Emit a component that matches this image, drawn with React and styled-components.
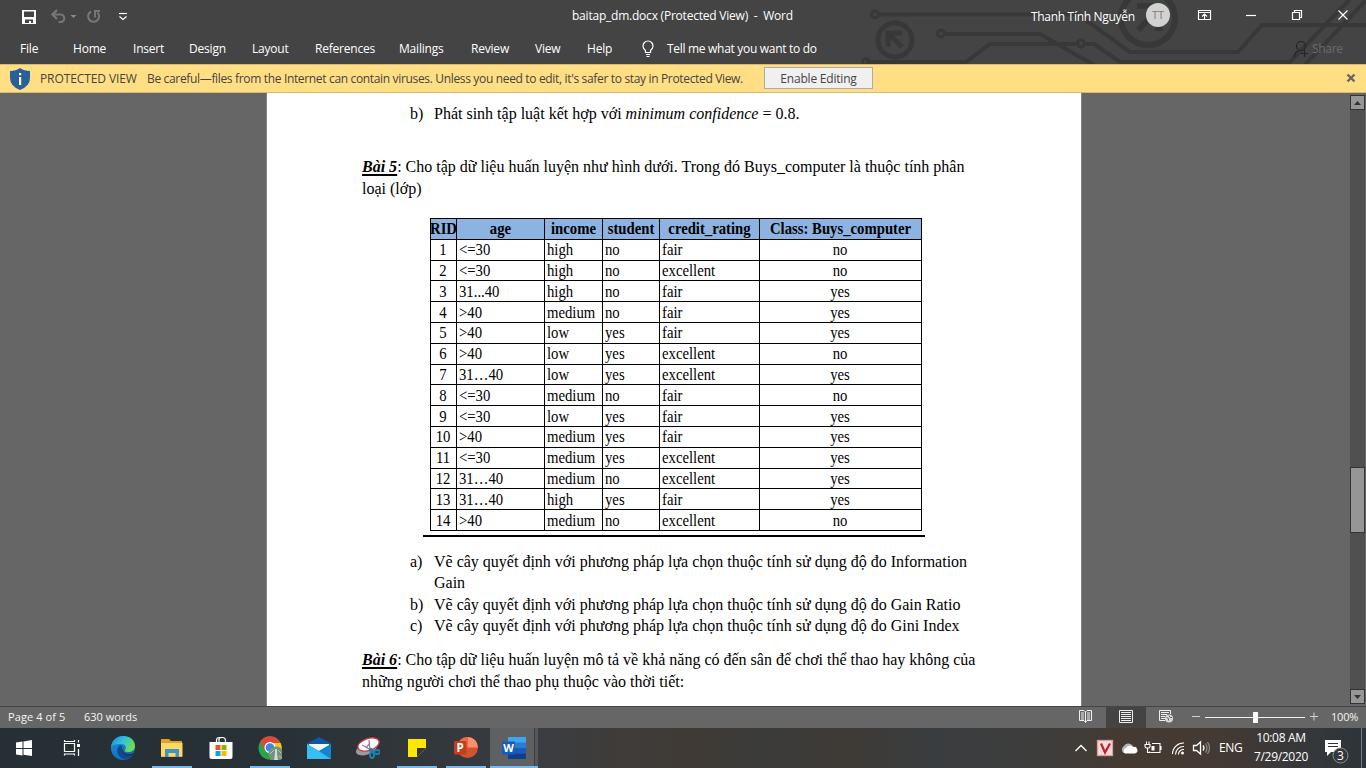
import React from "react";
import styled, { createGlobalStyle, css } from "styled-components";

const Global = createGlobalStyle`
  *, *::before, *::after { box-sizing: border-box; }
  body { margin: 0; overflow: hidden; }
`;

const ui = `"Open Sans", "Noto Sans", sans-serif`;
const serif = `"Liberation Serif", "Times New Roman", serif`;

const Window = styled.div`
  width: 1366px;
  height: 768px;
  display: flex;
  flex-direction: column;
  overflow: hidden;
  font: 12px ${ui};
`;

/* ---------- ribbon ---------- */
const Ribbon = styled.header`
  position: relative;
  flex: none;
  height: 64px;
  background: #444444;
  color: #fff;
`;
const Circuit = styled.svg`
  position: absolute;
  left: 850px;
  top: 0;
`;
const TitleBar = styled.div`
  position: relative;
  display: flex;
  align-items: center;
  height: 32px;
`;
const QuickAccess = styled.div`
  display: flex;
  width: 572px;
  height: 32px;
`;
const Title = styled.div`
  width: 459px;
  letter-spacing: -0.22px;
  white-space: pre;
  line-height: 32px;
`;
const UserName = styled.div`
  width: 115px;
  letter-spacing: -0.31px;
  white-space: nowrap;
`;
const Avatar = styled.div`
  width: 24px;
  height: 24px;
  margin: -2px 4px 0 0;
  border-radius: 50%;
  background: #d2d2d2;
  color: #8c7a70;
  font-size: 11px;
  line-height: 24px;
  text-align: center;
`;
const Menu = styled.nav`
  position: relative;
  display: flex;
  height: 32px;
  padding-left: 20px;
  line-height: 33px;
`;
const MenuItem = styled.div`
  width: ${(p) => p.$w}px;
  letter-spacing: ${(p) => p.$ls ?? -0.2}px;
  white-space: nowrap;
`;
const Share = styled.div`
  display: flex;
  margin-left: auto;
  width: 73px;
  gap: 3px;
  color: #6b6b6b;
  letter-spacing: -0.3px;
`;

/* ---------- message bar ---------- */
const MessageBar = styled.div`
  flex: none;
  display: flex;
  align-items: center;
  height: 29px;
  padding-left: 10px;
  border-top: 1px solid #d9b778;
  border-bottom: 1px solid #d9b778;
  background: #ffde84;
  color: #444;
  white-space: nowrap;
`;
const MessageTitle = styled.div`
  width: 117px;
  padding-left: 10px;
  letter-spacing: -0.1px;
`;
const MessageText = styled.div`
  width: 617px;
  letter-spacing: -0.337px;
`;
const EnableButton = styled.button`
  width: 109px;
  height: 22px;
  margin-top: -1px;
  padding: 0;
  border: 1px solid #ababab;
  background: #f0f0f0;
  color: #444;
  font: 12px/19px ${ui};
  letter-spacing: -0.2px;
`;
const CloseIcon = styled.svg`
  margin: -1px 10px 0 auto;
`;

/* ---------- document ---------- */
const Workspace = styled.main`
  flex: none;
  display: flex;
  height: 613px;
  background: #666666;
`;
const Page = styled.article`
  width: 816px;
  height: 613px;
  margin-left: 266px;
  padding: 10px 0 0 96px;
  border-left: 1px solid #828282;
  border-right: 1px solid #828282;
  background: #fff;
  color: #000;
  font: 16px/22px ${serif};
  white-space: nowrap;
  overflow: hidden;
`;
const Para = styled.p`
  margin: 0 0 0 -1px;
  padding-top: ${(p) => p.$top ?? 0}px;
`;
const Line = styled.span`
  display: block;
`;
const Heading = styled.span`
  font-weight: bold;
  font-style: italic;
  text-decoration: underline;
  text-decoration-thickness: 2px;
  text-underline-offset: 2px;
`;
const ListItem = styled.div`
  display: flex;
  margin-left: 47px;
  padding-top: ${(p) => p.$top ?? 0}px;
  line-height: ${(p) => p.$lh ?? 21.4}px;
`;
const Marker = styled.span`
  width: 24px;
`;
const Figure = styled.figure`
  width: 502px;
  height: 319px;
  margin: 18px 0 0 60px;
  padding-left: 7px;
  border-bottom: 2px solid #000;
`;
const Grid = styled.table`
  border-collapse: collapse;
  table-layout: fixed;
  width: 491px;
  height: 313px;
  font: 16px/18px ${serif};
`;
const cell = css`
  height: 20.8px;
  padding: 1px 0 0 2px;
  border: 1px solid #000;
  text-align: ${(p) => (p.$center ? "center" : "left")};
`;
const Th = styled.th`
  ${cell}
  padding-left: 0;
  background: #8db3e2;
`;
const Td = styled.td`
  ${cell}
`;
const Narrow = styled.span`
  display: block;
  margin: ${(p) => (p.$center ? "0 -1px 0 -4px" : 0)};
  transform: scaleX(0.92);
  transform-origin: ${(p) => (p.$center ? "center" : "left")};
`;
const HeadText = styled(Narrow)`
  margin: 0 -4px;
`;

/* ---------- scroll bar ---------- */
const Scroll = styled.div`
  display: flex;
  flex-direction: column;
  width: 15px;
  height: 609px;
  margin: 2px 1px 0 auto;
  background: #505050;
`;
const ScrollButton = styled.div`
  width: 15px;
  height: 15px;
  border: 1px solid #333;
  background: #969696;
  display: flex;
  align-items: center;
  justify-content: center;
`;
const Thumb = styled.div`
  height: 66px;
  margin: 357px 0 auto;
  border: 1px solid #333;
  background: #969696;
`;

/* ---------- status bar ---------- */
const StatusBar = styled.footer`
  flex: none;
  display: flex;
  height: 22px;
  border-top: 1px solid #444;
  background: #666666;
  color: #f4f4f4;
  font-size: 11px;
  line-height: 20px;
  padding-left: 8px;
  white-space: nowrap;
`;
const StatusText = styled.div`
  width: ${(p) => p.$w}px;
  letter-spacing: ${(p) => p.$ls ?? 0}px;
`;
const ViewButton = styled.div`
  width: 40px;
  background: ${(p) => (p.$on ? "#444444" : "transparent")};
  display: flex;
  justify-content: center;
`;

/* ---------- task bar ---------- */
const TaskBar = styled.div`
  flex: none;
  display: flex;
  height: 40px;
  background: linear-gradient(90deg, #263034 0, #283236 290px, #30363a 400px, #3a3d41 540px, #3f3c3a 620px, #3f3a35 690px, #3b3b3a 760px, #3e3a36 850px, #3a3d3f 930px, #3e3d3c 1050px, #453a31 1130px, #443a33 1210px, #35373b 1310px, #2d343a 1366px);
`;
const Task = styled.div`
  position: relative;
  width: ${(p) => p.$w ?? 49}px;
  height: 40px;
  display: flex;
  align-items: center;
  justify-content: center;
  background: ${(p) => (p.$active ? "linear-gradient(90deg, #5f6062 44px, #3c3d3f 44px, #3c3d3f 45px, #55565a 45px)" : "none")};
  &::after {
    content: "";
    position: absolute;
    left: ${(p) => (p.$active ? 0 : 5)}px;
    width: ${(p) => (p.$active ? 48 : 40)}px;
    bottom: 0;
    height: 2px;
    background: ${(p) => (p.$open || p.$active ? "#76b9ed" : "transparent")};
  }
`;
const Tray = styled.div`
  display: flex;
  margin-left: auto;
  width: 296px;
  color: #fff;
`;
const Lang = styled.div`
  width: 32px;
  line-height: 39px;
  letter-spacing: -0.3px;
`;
const Clock = styled.div`
  width: 60px;
  padding-top: 1px;
  line-height: 18.5px;
  letter-spacing: -0.3px;
  text-align: center;
  white-space: nowrap;
`;

const columns = [26, 88, 58, 57, 100, 162];
const heads = ["RID", "age", "income", "student", "credit_rating", "Class: Buys_computer"];
const rows = [
  ["<=30", "high", "no", "fair", "no"],
  ["<=30", "high", "no", "excellent", "no"],
  ["31...40", "high", "no", "fair", "yes"],
  [">40", "medium", "no", "fair", "yes"],
  [">40", "low", "yes", "fair", "yes"],
  [">40", "low", "yes", "excellent", "no"],
  ["31…40", "low", "yes", "excellent", "yes"],
  ["<=30", "medium", "no", "fair", "no"],
  ["<=30", "low", "yes", "fair", "yes"],
  [">40", "medium", "yes", "fair", "yes"],
  ["<=30", "medium", "yes", "excellent", "yes"],
  ["31…40", "medium", "no", "excellent", "yes"],
  ["31…40", "high", "yes", "fair", "yes"],
  [">40", "medium", "no", "excellent", "no"],
];

const menu = [
  ["File", 53], ["Home", 60], ["Insert", 56], ["Design", 63], ["Layout", 63],
  ["References", 84], ["Mailings", 72], ["Review", 64], ["View", 52], ["Help", 55],
];

const CircuitArt = () => (
  <Circuit width="516" height="64" viewBox="0 0 516 64" fill="none" stroke="#383838" strokeWidth="4">
    <circle cx="25" cy="14.500" r="3.500" strokeWidth="3" />
    <path d="M29 14.500H228L280 52H388L412 25H516" />
    <circle cx="45" cy="40" r="17" strokeWidth="5" />
    <path d="M52 33H38V47M39 34L52 47" strokeWidth="5" />
    <circle cx="91" cy="33.500" r="3.500" strokeWidth="3" />
    <path d="M95 34H190L244 65M16 62H116L140 44H226M236 44H244L270 62H440L501 -2M454 66L518 -2" />
    <circle cx="231" cy="43.500" r="3.500" strokeWidth="3" />
    <circle cx="16" cy="62" r="3.500" strokeWidth="3" />
    <circle cx="298" cy="18" r="27" strokeWidth="6" />
    <path d="M287 6H304M288 30L304 14M305 28H313" strokeWidth="6" />
  </Circuit>
);

const QuickIcons = () => (
  <svg width="140" height="32" viewBox="0 0 140 32" fill="none">
    <path d="M22 10h14v14H22z" fill="#fff" />
    <path d="M24 11.500h10v5.500H24z" fill="#444" />
    <path d="M25 19.500h8v3.500h-2v-2h-2v2h-4z" fill="#444" />
    <path d="M52 14.500h8.500a3.500 3.500 0 0 1 0 7.500h-2" stroke="#777" strokeWidth="2.200" />
    <path d="M57 10l-4.500 4.500 4.500 4.500" stroke="#777" strokeWidth="2.400" />
    <path d="M70.500 15h6L73.500 18z" fill="#8a8a8a" />
    <path d="M91 11.500a5.500 5.500 0 1 0 6.500 1M95 17.500v-6.500h5" stroke="#777" strokeWidth="2" />
    <path d="M119 13.500h8" stroke="#fff" strokeWidth="1.200" />
    <path d="M119.500 16.500l3.500 3 3.500-3" stroke="#fff" strokeWidth="1.200" />
  </svg>
);

const WindowIcons = () => (
  <svg width="180" height="32" viewBox="1174 0 180 32" fill="none" stroke="#fff" strokeWidth="1.200">
    <path d="M1198.500 10.500h12v9h-12zM1198.500 12.500h12M1204.500 19v-5M1202 16.500l2.500-2.500 2.500 2.500" />
    <path d="M1246 15.500h10" />
    <path d="M1292.500 12.500h7v7h-7zM1294.500 12.500v-2h7v7h-2" />
    <path d="M1338.500 10.500l9 9M1347.500 10.500l-9 9" />
  </svg>
);

const ViewIcon = ({ kind }) => (
  <svg width="16" height="20" viewBox="0 0 16 20" fill="none" stroke="#f0f0f0">
    {kind === "read" && <path d="M7.500 5L6 3.500H1.500v10H6l1.500 2 1.500-2h4.500v-10H9L7.500 5v10M3 6h3M3 8h3M3 10h3M3 12h3M9 6h3M9 8h3M9 10h3M9 12h3" />}
    {kind === "print" && <path d="M1.500 3.500h13v12h-13zM3 5.500h10M3 7.500h10M3 9.500h10M3 11.500h10M3 13.500h10" />}
    {kind === "web" && (
      <>
        <path d="M7 13.500H1.500v-10h11V7M3 5.500h8M3 7.500h6M3 9.500h4M3 11.500h4" />
        <circle cx="11" cy="11.500" r="4" fill="#d8d8d8" stroke="none" />
        <path d="M8.500 10.500l2 1v2M11 8.500l1 2h2" stroke="#666" />
      </>
    )}
  </svg>
);

const icons = {
  start: <path d="M4 6.500l6.500-.900V12H4zM11.500 5.400L20 4v8h-8.500zM4 13h6.500v6.400L4 18.500zM11.500 13H20v7l-8.500-1.200z" fill="#fff" />,
  view: (
    <g stroke="#fff" fill="none" strokeWidth="1.200">
      <path d="M3.500 7.500h10v8h-10zM3.500 4v1.500h10V4M3.500 19.500V18h10v1.500M17.500 4v2.500M17.500 13v7" />
      <path d="M16 9.500h3" strokeWidth="3" />
    </g>
  ),
  edge: (
    <>
      <defs>
        <linearGradient id="eg" x1="0" y1="0" x2="1" y2=".5"><stop stopColor="#1687d2" /><stop offset=".5" stopColor="#32bfdd" /><stop offset="1" stopColor="#68df52" /></linearGradient>
        <linearGradient id="eb" x1="0" y1="0" x2="1" y2="1"><stop stopColor="#1b91de" /><stop offset="1" stopColor="#115ca9" /></linearGradient>
      </defs>
      <circle cx="12" cy="12" r="12" fill="url(#eb)" />
      <path d="M0 11C1 4 6 0 12 0c7 0 12 4 12 10 0 4-3 6-7 6-3 0-4-1-3-2 2-3 0-6-4-6-5 0-9 1-10 3z" fill="url(#eg)" />
      <path d="M9 9c-5 4-3 12 4 14 4 0 7-2 9-5-6 3-12 0-11-5 0-2 1-3-2-4z" fill="#0c4a94" />
      <path d="M12.500 12.500c-1.500 3 1.500 5.500 5 5.500 2.500 0 4-.500 6-1.500l.5-3v3.500l-1.500 2c-5 1.500-11 0-11.500-4 0-1.500.500-2.500 1.500-2.500z" fill="#29343a" />
    </>
  ),
  folder: (
    <>
      <path d="M1 3h8l2 2h11v16H1z" fill="#e5a321" />
      <path d="M1 7h21.500v13.500H1z" fill="#ffd864" />
      <path d="M5 21v-8h14v8h-3.500v-4h-7v4z" fill="#3c93d2" />
    </>
  ),
  store: (
    <>
      <path d="M7.500 7V4.500q0-3 3-3h3q3 0 3 3V7M10 6V3.500q0-2 3-2" stroke="#fff" fill="none" strokeWidth="1.200" />
      <path d="M.5 6H23.500v15q0 2-2 2h-19q-2 0-2-2z" fill="#fff" />
      <path d="M6.500 9h5v5h-5z" fill="#f25022" /><path d="M12.500 9h5v5h-5z" fill="#7fba00" />
      <path d="M6.500 15h5v5h-5z" fill="#00a4ef" /><path d="M12.500 15h5v5h-5z" fill="#ffb900" />
    </>
  ),
  chrome: (
    <>
      <circle cx="12" cy="12" r="11.500" fill="#2ba24c" />
      <path d="M2 6a11.500 11.500 0 0 1 20.500 1L12 9l-5 5z" fill="#dc493a" />
      <path d="M12 7h10.600A11.500 11.500 0 0 1 12 23.500l5-8z" fill="#fbc61d" />
      <circle cx="12" cy="11.500" r="5.500" fill="#fff" /><circle cx="12" cy="11.500" r="4.300" fill="#4285e8" />
      <circle cx="18" cy="18" r="7.500" fill="#71957a" />
      <path d="M17 13h2v4l1 8h-4l1-8z" fill="#ded5df" /><path d="M12 18l4-4M20 14l3 3M21 20l3 2" stroke="#bbc7b8" />
    </>
  ),
  mail: (
    <>
      <path d="M0 7.500L12 1l12 6.500V12H0z" fill="#0c59a4" />
      <path d="M2 8h20v7H2z" fill="#f5f5f5" />
      <path d="M0 8l12 7 12-7v15H0z" fill="#28a8ea" />
      <path d="M0 8l24 15H0z" fill="#35bff2" /><path d="M12 15l12-7v15z" fill="#1583ce" />
    </>
  ),
  snip: (
    <>
      <ellipse cx="10.500" cy="13" rx="11" ry="5.500" transform="rotate(-20 10.500 13)" fill="#9b9b9b" />
      <ellipse cx="12.500" cy="8.500" rx="11" ry="6" transform="rotate(-18 12.500 8.500)" fill="#fff" stroke="#d3323e" strokeWidth="1.300" />
      <path d="M6 9l9 5M13 4l1 10M14 7l-4 5" stroke="#888" strokeWidth="1.300" />
      <g fill="none" stroke="#1f7fb4" strokeWidth="2"><ellipse cx="16" cy="19" rx="2" ry="3" /><ellipse cx="21" cy="16" rx="3" ry="2" /><path d="M13 14l6 2M15 12l1 5" /></g>
    </>
  ),
  note: <><path d="M3 3h18v9l-9 9H3z" fill="#ffe500" /><path d="M12 12h9l-9 9z" fill="#33363a" /></>,
  ppt: (
    <>
      <circle cx="13.500" cy="11.500" r="10.500" fill="#d35230" /><path d="M13.500 1A10.500 10.500 0 0 1 24 11.500H13.500z" fill="#ff8f6b" /><path d="M13.500 1v10.500H3A10.500 10.500 0 0 1 13.500 1z" fill="#ed6c47" />
      <rect x="0" y="5" width="12.500" height="13.500" rx="1" fill="#c43e1c" />
      <text x="6.200" y="15.700" fill="#fff" fontSize="11.500" fontWeight="bold" fontFamily="Open Sans" textAnchor="middle">P</text>
    </>
  ),
  word: (
    <>
      <path d="M6 1h18v6H6z" fill="#41a5ee" /><path d="M6 6.500h18V12H6z" fill="#2b7cd3" /><path d="M6 12h18v5.500H6z" fill="#185abd" /><path d="M6 17.500h18V23H6z" fill="#103f91" />
      <rect x="0" y="5.500" width="13" height="13" rx="1" fill="#185abd" />
      <text x="6.500" y="15.900" fill="#fff" fontSize="11" fontWeight="bold" fontFamily="Open Sans" textAnchor="middle">W</text>
    </>
  ),
};
const tasks = [
  ["start", 48], ["view", 50], ["edge"], ["folder", 49, 1], ["store"], ["chrome", 49, 1],
  ["mail"], ["snip"], ["note", 49, 1], ["ppt", 49, 1], ["word", 48, 0, 1],
];

const TrayIcons = () => (
  <svg width="149" height="40" viewBox="1070 0 149 40" fill="none" stroke="#fff" strokeWidth="1.300">
    <path d="M1075.500 23l5.500-5.500 5.500 5.500" />
    <rect x="1097.500" y="12.500" width="15" height="15" fill="#f2dede" stroke="#e79a98" />
    <path d="M1101 15.500l4 9 5-9" stroke="#c81d25" strokeWidth="2.200" />
    <path d="M1124 25a4 4 0 0 1 0-7 5 5 0 0 1 8-1l3 4v4z" fill="#b5b5b5" stroke="none" />
    <path d="M1125 25.500a3 3 0 0 1 1-5.500 4.500 4.500 0 0 1 7-1 3.300 3.300 0 0 1 2 6.500z" fill="#fff" stroke="none" />
    <path d="M1149.500 23.500v1h10.500v-9h-8M1161 18v4M1145 16.500h5v2l-1 1.500h-3l-1-1.500zM1146.500 16v-2.500M1149 16v-2.500M1147.500 20v4.500h2" strokeWidth="1.100" />
    <path d="M1151.500 18h3v4.500h-3z" fill="#fff" stroke="none" />
    <path d="M1172.500 26a11 11 0 0 1 11.500-11M1175.500 26.500a8 8 0 0 1 8.500-8M1178.500 26.500a5 5 0 0 1 5.500-5" strokeWidth="1.100" />
    <circle cx="1182.500" cy="25" r="1.500" fill="#fff" stroke="none" />
    <path d="M1193.500 17.500h3l4-3.500v12l-4-3.500h-3z" />
    <path d="M1203 17.500q2 2.500 0 5" /><path d="M1205.500 15.500q3 4.500 0 9M1207.500 14q4 6 0 12" stroke="#8b8784" />
  </svg>
);

export default function App() {
  return (
    <>
      <Global />
      <Window>
        <Ribbon>
          <CircuitArt />
          <TitleBar>
            <QuickAccess><QuickIcons /></QuickAccess>
            <Title>{"baitap_dm.docx (Protected View)  -  Word"}</Title>
            <UserName>Thanh Tính Nguyễn</UserName>
            <Avatar>TT</Avatar>
            <WindowIcons />
          </TitleBar>
          <Menu>
            {menu.map(([label, w]) => <MenuItem key={label} $w={w}>{label}</MenuItem>)}
            <MenuItem $w={25}>
              <svg width="12" height="32" viewBox="0 0 12 32" fill="none" stroke="#fff" strokeWidth="1.200">
                <path d="M3.500 20.500v-2Q1 16.500 1 14a5 5 0 0 1 10 0q0 2.500-2.500 4.500v2zM4 22.500h4M4.500 24.500h3" />
              </svg>
            </MenuItem>
            <MenuItem $w={160} $ls={-0.3}>Tell me what you want to do</MenuItem>
            <Share>
              <svg width="16" height="32" viewBox="0 0 16 32" fill="none" stroke="#252525" strokeWidth="1.200">
                <circle cx="8" cy="14" r="4.500" /><path d="M1.500 25q0-6 5-6.500M8 21.500h7M11.500 18v7" />
              </svg>
              Share
            </Share>
          </Menu>
        </Ribbon>

        <MessageBar>
          <svg width="20" height="22" viewBox="0 0 20 22">
            <path d="M10 0q4 3 10 3v7q0 8-10 12Q0 18 0 10V3q6 0 10-3z" fill="#2a6099" />
            <path d="M9 5h2.200v2.200H9zM9 9h2.200v8H9z" fill="#fff" />
          </svg>
          <MessageTitle>PROTECTED VIEW</MessageTitle>
          <MessageText>Be careful—files from the Internet can contain viruses. Unless you need to edit, it's safer to stay in Protected View.</MessageText>
          <EnableButton>Enable Editing</EnableButton>
          <CloseIcon width="10" height="10" viewBox="0 0 10 10">
            <path d="M1.500 1.500l7 7M8.500 1.500l-7 7" stroke="#666" strokeWidth="2.400" />
          </CloseIcon>
        </MessageBar>

        <Workspace>
          <Page>
            <ListItem $lh={22}><Marker>b)</Marker><span>Phát sinh tập luật kết hợp với <i>minimum confidence</i> = 0.8.</span></ListItem>
            <Para $top={31}>
              <Line><Heading>Bài 5</Heading>: Cho tập dữ liệu huấn luyện như hình dưới. Trong đó Buys_computer là thuộc tính phân</Line>
              <Line>loại (lớp)</Line>
            </Para>
            <Figure>
              <Grid>
                <colgroup>{columns.map((w, i) => <col key={i} width={w} />)}</colgroup>
                <thead><tr>{heads.map((h) => <Th key={h} $center><HeadText $center>{h}</HeadText></Th>)}</tr></thead>
                <tbody>
                  {rows.map((r, i) => (
                    <tr key={i}>
                      <Td $center><Narrow $center>{i + 1}</Narrow></Td>
                      {r.map((v, j) => <Td key={j} $center={j === 4}><Narrow $center={j === 4}>{v}</Narrow></Td>)}
                    </tr>
                  ))}
                </tbody>
              </Grid>
            </Figure>
            <ListItem $top={14}><Marker>a)</Marker><span>Vẽ cây quyết định với phương pháp lựa chọn thuộc tính sử dụng độ đo Information<br />Gain</span></ListItem>
            <ListItem><Marker>b)</Marker><span>Vẽ cây quyết định với phương pháp lựa chọn thuộc tính sử dụng độ đo Gain Ratio</span></ListItem>
            <ListItem><Marker>c)</Marker><span>Vẽ cây quyết định với phương pháp lựa chọn thuộc tính sử dụng độ đo Gini Index</span></ListItem>
            <Para $top={12}>
              <Line><Heading>Bài 6</Heading>: Cho tập dữ liệu huấn luyện mô tả về khả năng có đến sân để chơi thể thao hay không của</Line>
              <Line>những người chơi thể thao phụ thuộc vào thời tiết:</Line>
            </Para>
          </Page>
          <Scroll>
            <ScrollButton><svg width="7" height="4"><path d="M0 4L3.500 0 7 4z" fill="#333" /></svg></ScrollButton>
            <Thumb />
            <ScrollButton><svg width="7" height="4"><path d="M0 0h7L3.500 4z" fill="#333" /></svg></ScrollButton>
          </Scroll>
        </Workspace>

        <StatusBar>
          <StatusText $w={76} $ls={0.1}>Page 4 of 5</StatusText>
          <StatusText $w={982}>630 words</StatusText>
          <ViewButton><ViewIcon kind="read" /></ViewButton>
          <ViewButton $on><ViewIcon kind="print" /></ViewButton>
          <ViewButton><ViewIcon kind="web" /></ViewButton>
          <svg width="145" height="21" viewBox="1186 0 145 21" stroke="#f0f0f0">
            <path d="M1192 9.500h8M1310 9.500h8M1314 5.500v8" stroke="#d0d0d0" /><path d="M1205 10.500h100" /><path d="M1253 5h5v11h-5z" fill="#fff" stroke="none" />
          </svg>
          <StatusText $w={30} $ls={-0.2}>100%</StatusText>
        </StatusBar>

        <TaskBar>
          {tasks.map(([name, w, open, active]) => (
            <Task key={name} $w={w} $open={open} $active={active}>
              <svg width="24" height="24" viewBox="0 0 24 24">{icons[name]}</svg>
            </Task>
          ))}
          <Tray>
            <TrayIcons />
            <Lang>ENG</Lang>
            <Clock>10:08 AM<br />7/29/2020</Clock>
            <svg width="55" height="40" viewBox="1311 0 55 40">
              <path d="M1325 12h16v12h-10l-4 4v-4h-2z" fill="#fff" /><path d="M1328 15.500h10M1328 18.500h10" stroke="#333" />
              <circle cx="1340.500" cy="27.500" r="7.500" fill="#35373a" stroke="#8b8d8f" />
              <text x="1340.500" y="31.500" fill="#fff" fontSize="12" fontFamily="Open Sans" textAnchor="middle">3</text>
              <path d="M1361.500 0v40" stroke="#777" />
            </svg>
          </Tray>
        </TaskBar>
      </Window>
    </>
  );
}
